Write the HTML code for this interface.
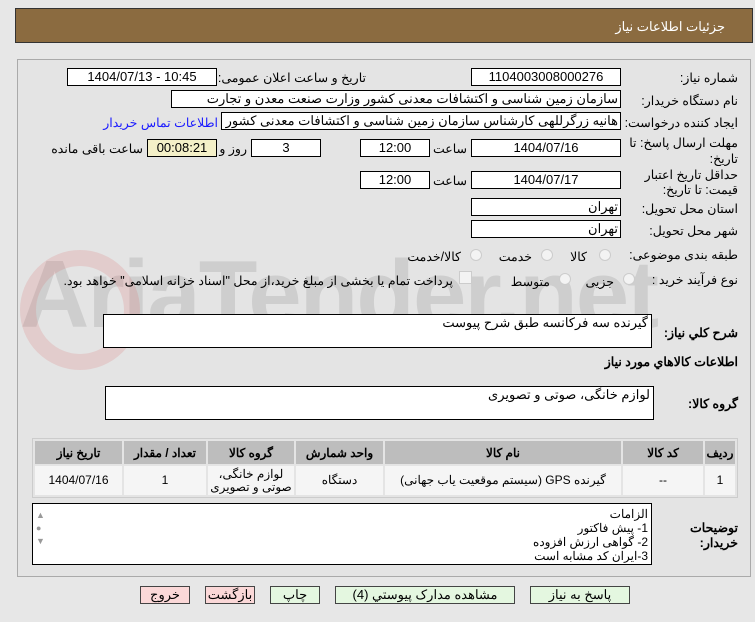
<!DOCTYPE html>
<html><head><meta charset="utf-8"><style>
*{margin:0;padding:0;box-sizing:border-box}
body{width:755px;height:622px;background:#e7e7e7;font-family:"Liberation Sans","Noto Sans CJK SC",sans-serif;font-size:12px;color:#000;position:relative;overflow:hidden}
.a{position:absolute;white-space:nowrap}
.box{position:absolute;background:#fff;border:1px solid #000;text-align:center;line-height:16px;font-size:13px}
.lbl{position:absolute;white-space:nowrap;direction:rtl;font-size:12.5px}
.rad{position:absolute;width:12px;height:12px;border-radius:50%;border:1px solid #ccc;background:#f3f3f3}
.btn{position:absolute;height:18px;border:1px solid #444;text-align:center;line-height:16px;font-size:13px;direction:rtl}
table{border-collapse:separate;border-spacing:2px;position:absolute;left:32px;top:438px;width:706px;background:#e4e4e4;border:1px solid #ccc;direction:rtl}
th{background:#bdbdbd;height:23px;font-size:12px}
td{background:#f5f5f5;height:29px;text-align:center;font-size:12px;line-height:13px}
</style></head><body>
<div class="a" style="left:15px;top:8px;width:738px;height:35px;background:#8b6b40;border:1px solid #333"></div>
<div class="lbl" style="right:30px;top:19px;color:#fff;font-size:13px">جزئیات اطلاعات نیاز</div>
<div class="a" style="left:17px;top:59px;width:734px;height:518px;border:1px solid #aaa;background:#e4e4e4"></div>
<div class="a" style="left:20px;top:240px;font-size:96px;font-weight:bold;color:rgba(150,150,150,0.28);letter-spacing:-2px">AriaTender.net</div>
<div class="a" style="left:20px;top:250px;width:120px;height:120px;border:16px solid rgba(220,120,120,0.22);border-radius:50%"></div>

<div class="lbl" style="right:17px;top:70px">شماره نیاز:</div>
<div class="box" style="left:471px;top:68px;width:150px;height:18px">1104003008000276</div>
<div class="lbl" style="right:389px;top:70px">تاریخ و ساعت اعلان عمومی:</div>
<div class="box" style="left:67px;top:68px;width:150px;height:18px">1404/07/13 - 10:45</div>

<div class="lbl" style="right:17px;top:93px">نام دستگاه خریدار:</div>
<div class="box" style="left:171px;top:90px;width:450px;height:18px;text-align:right;padding-right:2px;direction:rtl">سازمان زمین شناسی و اکتشافات معدنی کشور وزارت صنعت معدن و تجارت</div>

<div class="lbl" style="right:17px;top:115px">ایجاد کننده درخواست:</div>
<div class="box" style="left:221px;top:112px;width:400px;height:18px;text-align:right;padding-right:2px;direction:rtl;overflow:hidden">هانیه زرگرللهی کارشناس سازمان زمین شناسی و اکتشافات معدنی کشور وزارت</div>
<div class="lbl" style="right:537px;top:115px;color:#1a1aff">اطلاعات تماس خریدار</div>

<div class="lbl" style="right:17px;top:135px">مهلت ارسال پاسخ: تا</div>
<div class="lbl" style="right:17px;top:151px">تاریخ:</div>
<div class="box" style="left:471px;top:139px;width:150px;height:18px">1404/07/16</div>
<div class="lbl" style="right:288px;top:141px">ساعت</div>
<div class="box" style="left:360px;top:139px;width:70px;height:18px">12:00</div>
<div class="box" style="left:251px;top:139px;width:70px;height:18px">3</div>
<div class="lbl" style="right:508px;top:141px">روز و</div>
<div class="box" style="left:147px;top:139px;width:70px;height:18px;background:#f4f0c8">00:08:21</div>
<div class="lbl" style="right:612px;top:141px">ساعت باقی مانده</div>

<div class="lbl" style="right:17px;top:167px">حداقل تاریخ اعتبار</div>
<div class="lbl" style="right:17px;top:182px">قیمت: تا تاریخ:</div>
<div class="box" style="left:471px;top:171px;width:150px;height:18px">1404/07/17</div>
<div class="lbl" style="right:288px;top:173px">ساعت</div>
<div class="box" style="left:360px;top:171px;width:70px;height:18px">12:00</div>

<div class="lbl" style="right:17px;top:201px">استان محل تحویل:</div>
<div class="box" style="left:471px;top:198px;width:150px;height:18px;text-align:right;padding-right:2px">تهران</div>
<div class="lbl" style="right:17px;top:223px">شهر محل تحویل:</div>
<div class="box" style="left:471px;top:220px;width:150px;height:18px;text-align:right;padding-right:2px">تهران</div>

<div class="lbl" style="right:17px;top:247px">طبقه بندی موضوعی:</div>
<div class="rad" style="left:599px;top:249px"></div><div class="lbl" style="right:168px;top:249px">کالا</div>
<div class="rad" style="left:541px;top:249px"></div><div class="lbl" style="right:223px;top:249px">خدمت</div>
<div class="rad" style="left:470px;top:249px"></div><div class="lbl" style="right:294px;top:249px">کالا/خدمت</div>

<div class="lbl" style="right:17px;top:272px">نوع فرآیند خرید :</div>
<div class="rad" style="left:623px;top:273px"></div><div class="lbl" style="right:141px;top:274px">جزیی</div>
<div class="rad" style="left:559px;top:273px"></div><div class="lbl" style="right:205px;top:274px">متوسط</div>
<div class="a" style="left:459px;top:271px;width:13px;height:13px;border:1px solid #ccc;background:#f3f3f3"></div>
<div class="lbl" style="right:302px;top:273px">پرداخت تمام یا بخشی از مبلغ خرید،از محل "اسناد خزانه اسلامی" خواهد بود.</div>

<div class="lbl" style="right:17px;top:325px;font-weight:bold">شرح کلي نیاز:</div>
<div class="box" style="left:103px;top:314px;width:549px;height:34px;text-align:right;padding-right:3px;direction:rtl">گیرنده سه فرکانسه طبق شرح پیوست</div>
<div class="lbl" style="right:17px;top:354px;font-weight:bold">اطلاعات کالاهاي مورد نیاز</div>
<div class="lbl" style="right:17px;top:396px;font-weight:bold">گروه کالا:</div>
<div class="box" style="left:105px;top:386px;width:549px;height:34px;text-align:right;padding-right:3px;direction:rtl">لوازم خانگی، صوتی و تصویری</div>

<table>
<tr><th style="width:30px">ردیف</th><th style="width:80px">کد کالا</th><th style="width:236px">نام کالا</th><th style="width:87px">واحد شمارش</th><th style="width:86px">گروه کالا</th><th style="width:82px">تعداد / مقدار</th><th>تاریخ نیاز</th></tr>
<tr><td>1</td><td>--</td><td>گیرنده GPS (سیستم موقعیت یاب جهانی)</td><td>دستگاه</td><td>لوازم خانگی،<br>صوتی و تصویری</td><td>1</td><td>1404/07/16</td></tr>
</table>

<div class="lbl" style="right:17px;top:520px;font-weight:bold">توضیحات</div>
<div class="lbl" style="right:17px;top:535px;font-weight:bold">خریدار:</div>
<div class="box" style="left:32px;top:503px;width:620px;height:62px;text-align:right;padding-right:3px;padding-top:3px;direction:rtl;line-height:14px;font-size:12px">الزامات<br>1-  پیش فاکتور<br>2- گواهی ارزش افزوده<br>3-ایران کد مشابه است</div>
<div class="a" style="left:36px;top:509px;font-size:9px;color:#999;line-height:13px">▲<br>●<br>▼</div>

<div class="btn" style="left:530px;top:586px;width:100px;background:#e4f7e0">پاسخ به نیاز</div>
<div class="btn" style="left:335px;top:586px;width:180px;background:#e4f7e0">مشاهده مدارک پیوستي (4)</div>
<div class="btn" style="left:270px;top:586px;width:50px;background:#e4f7e0">چاپ</div>
<div class="btn" style="left:205px;top:586px;width:50px;background:#fbd8d8">بازگشت</div>
<div class="btn" style="left:140px;top:586px;width:50px;background:#fbd8d8">خروج</div>
</body></html>
